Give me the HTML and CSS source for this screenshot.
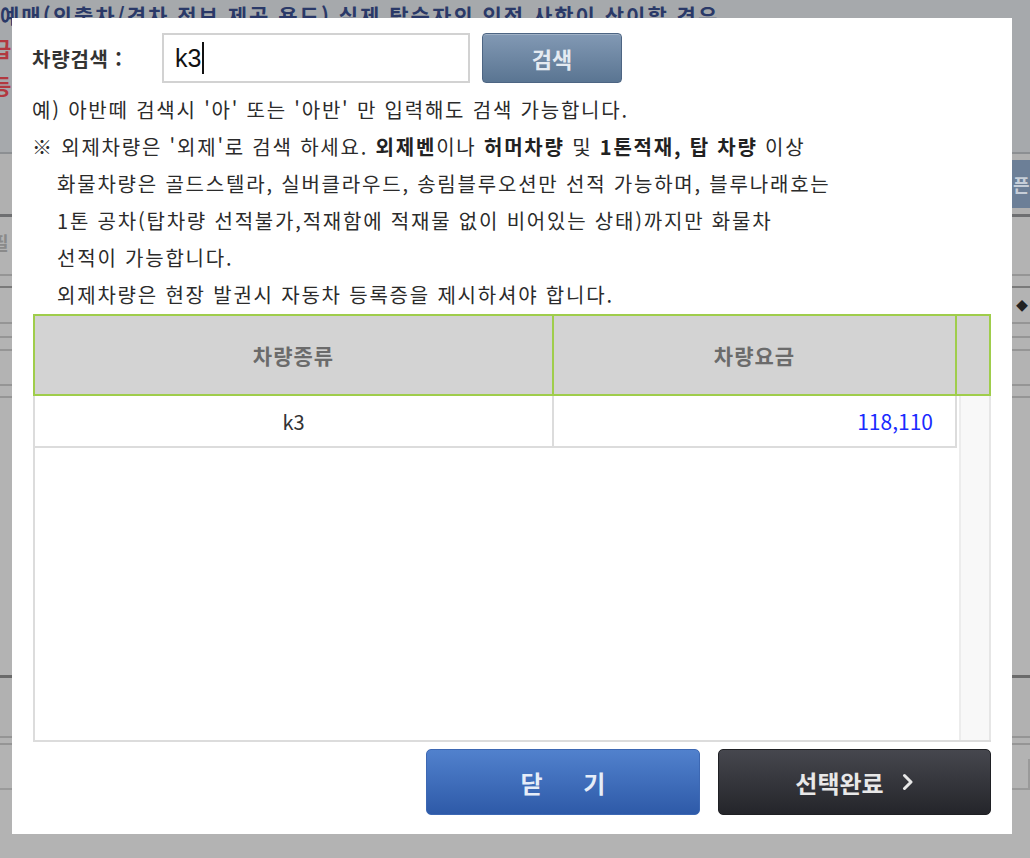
FILE: index.html
```html
<!DOCTYPE html>
<html lang="ko">
<head>
<meta charset="utf-8">
<title>차량검색</title>
<link rel="stylesheet" href="styles.css">
</head>
<body>
<div class="page">
  <div class="page-top">
    <p class="bg-notice">예매(외출차/경차 정보 제공 용도) 실제 탑승자의 인적 사항이 상이할 경우</p>
    <p class="bg-red">급</p>
    <p class="bg-red">등</p>
  </div>
  <div class="bg-line l1"></div>
  <div class="band b1"><span class="bg-btn">픈</span></div>
  <div class="bg-line l2"></div>
  <div class="band b2"><span class="bg-glyph">필</span></div>
  <div class="bg-line l3"></div>
  <div class="band b3"></div>
  <div class="bg-line l4"></div>
  <div class="band b4"><span class="bg-mark">◆</span></div>
  <div class="bg-line l3"></div>
  <div class="band b5"></div>
  <div class="bg-line l3"></div>
  <div class="band b6"></div>
  <div class="bg-line l3"></div>
  <div class="band b7"></div>
  <div class="bg-line l3"></div>
  <div class="band b8"></div>
  <div class="bg-line l3"></div>
  <div class="band b9"></div>
  <div class="bg-line l5"></div>
  <div class="band b10"></div>
  <div class="bg-line l3"></div>
  <div class="band b11"></div>
  <div class="bg-line l3"></div>
  <div class="bottom-row">
    <div class="bbox w1"></div>
    <div class="vsep"></div>
    <div class="bbox w2"></div>
    <div class="vsep"></div>
    <div class="bbox w3"><span>0-1</span></div>
    <div class="vsep"></div>
    <div class="bbox w4"><span>0101-7021-7-18</span></div>
  </div>
</div>

<div class="modal">
  <div class="search-row">
    <label class="search-label">차량검색 :</label>
    <div class="search-input"><span class="typed">k3</span><span class="caret"></span></div>
    <button class="search-btn">검색</button>
  </div>
  <div class="notes">
    <p>예) 아반떼 검색시 '아' 또는 '아반' 만 입력해도 검색 가능합니다.</p>
    <p>※ 외제차량은 '외제'로 검색 하세요. <b>외제벤</b>이나 <b>허머차량</b> 및 <b>1톤적재, 탑 차량</b> 이상</p>
    <p class="indent">화물차량은 골드스텔라, 실버클라우드, 송림블루오션만 선적 가능하며, 블루나래호는</p>
    <p class="indent">1톤 공차(탑차량 선적불가,적재함에 적재물 없이 비어있는 상태)까지만 화물차</p>
    <p class="indent">선적이 가능합니다.</p>
    <p class="indent">외제차량은 현장 발권시 자동차 등록증을 제시하셔야 합니다.</p>
  </div>
  <div class="grid">
    <div class="grid-head">
      <div class="hcell c1">차량종류</div>
      <div class="hcell c2">차량요금</div>
      <div class="hcell c3"></div>
    </div>
    <div class="grid-body">
      <div class="rows">
        <div class="row">
          <div class="cell c1">k3</div>
          <div class="cell c2 price">118,110</div>
        </div>
      </div>
      <div class="gutter"></div>
    </div>
  </div>
  <div class="actions">
    <button class="btn btn-close">닫 기</button>
    <button class="btn btn-done"><span>선택완료</span><svg class="chev" width="12" height="18" viewBox="0 0 12 18"><polyline points="2.5,2.5 9,9 2.5,15.5" fill="none" stroke="#e8e8e8" stroke-width="3" stroke-linecap="round" stroke-linejoin="round"/></svg></button>
  </div>
</div>
</body>
</html>
```
FILE: styles.css
```css
* { box-sizing: border-box; }
html, body { margin: 0; padding: 0; }
body {
  width: 1030px;
  height: 858px;
  overflow: hidden;
  background: #b3b3b3;
  font-family: "Noto Sans CJK KR", "Noto Sans", sans-serif;
  color: #2b2b2b;
}
p { margin: 0; }

/* background page */
.page { width: 1030px; }
.page-top {
  height: 152px;
  background: #a6a9ac;
}
.bg-notice {
  font-size: 21px;
  font-weight: 700;
  letter-spacing: 2px;
  color: #2a3968;
  line-height: 30px;
  white-space: nowrap;
  overflow: hidden;
  width: 1030px;
}
.bg-red {
  font-size: 21px;
  font-weight: 700;
  color: #b2383f;
  line-height: 37px;
  margin-left: -8px;
  width: 20px;
}
.bg-line { height: 2px; background: #8c8f92; }
.bg-line.l2 { height: 3px; background: #6e6f71; }
.bg-line.l3 { height: 2px; background: #959595; }
.bg-line.l4 { height: 2px; background: #7a7a7a; }
.bg-line.l5 { height: 3px; background: #6a6a6a; }
.band { background: #b3b3b3; display: flex; justify-content: space-between; align-items: center; }
.b1 { height: 60px; background: #b0b0b0; justify-content: flex-end; }
.bg-btn {
  width: 18px; height: 48px; background: #6c7f97; color: #c6ced8;
  font-size: 18px; font-weight: 700; line-height: 48px;
  overflow: hidden; white-space: nowrap; text-indent: 1px;
}
.b2 { height: 57px; }
.bg-glyph { color: #8a8a8a; font-size: 18px; font-weight: 700; margin-left: -8px; margin-top: -8px; }
.b3 { height: 10px; }
.b4 { height: 34px; justify-content: flex-end; }
.bg-mark { color: #222; font-size: 12px; margin-right: 2px; }
.b5 { height: 12px; }
.b6 { height: 11px; }
.b7 { height: 33px; }
.b8 { height: 10px; }
.b9 { height: 277px; }
.b10 { height: 58px; background: #b1b1b1; }
.b11 { height: 5px; }
.bottom-row { display: flex; align-items: flex-start; height: 60px; padding-top: 14px; }
.bbox { height: 31px; border: 2px solid #9a9a9a; border-top: none; }
.bbox span { display: block; color: #333; font-size: 20px; line-height: 22px; padding: 2px 10px; }
.w1 { width: 68px; margin-left: -2px; }
.vsep { width: 2px; height: 50px; background: #9a9a9a; margin: 0 20px 0 30px; }
.w2 { width: 258px; }
.w3 { width: 258px; }
.w4 { width: 320px; }

/* modal */
.modal {
  position: fixed;
  left: 12px;
  top: 18px;
  width: 1000px;
  height: 816px;
  background: #fff;
  padding: 15px 21px 0 20px;
}
.search-row { display: flex; align-items: center; height: 50px; }
.search-label {
  width: 130px;
  font-size: 20px;
  font-weight: 700;
  letter-spacing: 0.8px;
  color: #333;
}
.search-input {
  width: 308px;
  height: 50px;
  border: 2px solid #d2d2d2;
  display: flex;
  align-items: center;
  padding-left: 11px;
  font-family: "Liberation Sans", Arial, sans-serif;
  font-size: 25px;
  color: #111;
}
.caret { display: inline-block; width: 2px; height: 32px; background: #111; margin-left: 1px; }
.search-btn {
  margin-left: 12px;
  width: 140px;
  height: 50px;
  border: 1px solid #4d6583;
  border-radius: 4px;
  background: linear-gradient(#8299b4, #5a7592);
  color: #e4eaf1;
  font-family: "Noto Sans CJK KR", sans-serif;
  font-size: 22px;
  font-weight: 700;
  box-shadow: inset 0 1px 0 rgba(255,255,255,0.25);
}
.notes {
  margin-top: 8px;
  font-size: 20px;
  letter-spacing: 1.8px;
  line-height: 37px;
  color: #2b2b2b;
  white-space: nowrap;
}
.notes b { font-weight: 700; color: #222; }
.notes .indent { padding-left: 25px; }

.grid { margin-left: 1px; width: 958px; margin-top: 1px; }
.grid-head { display: flex; height: 82px; }
.hcell {
  background: #d3d3d3;
  border: 2px solid #9fcd4b;
  display: flex; align-items: center; justify-content: center;
  font-size: 21px; font-weight: 700; color: #6b6b6b; letter-spacing: 1px;
}
.hcell.c1 { width: 521px; }
.hcell.c2 { width: 405px; margin-left: -2px; }
.hcell.c3 { width: 36px; margin-left: -2px; }
.grid-body { display: flex; height: 346px; border-left: 2px solid #dcdcdc; border-bottom: 2px solid #dcdcdc; }
.rows { width: 922px; }
.row { display: flex; height: 52px; border-bottom: 2px solid #dcdcdc; }
.cell { display: flex; align-items: center; font-size: 20px; color: #333; }
.cell.c1 { width: 519px; justify-content: center; border-right: 2px solid #dcdcdc; }
.cell.c2 { width: 403px; justify-content: flex-end; padding-right: 22px; border-right: 2px solid #dcdcdc; }
.price { color: #1a2bff; font-size: 21px; }
.gutter { width: 34px; background: #f8f8f8; border-left: 2px solid #ececec; border-right: 2px solid #e6e6e6; margin-left: 2px; }

.actions { display: flex; justify-content: flex-end; gap: 18px; margin-top: 7px; width: 959px; }
.btn {
  height: 66px;
  border-radius: 5px;
  font-family: "Noto Sans CJK KR", sans-serif;
  font-size: 24px;
  font-weight: 700;
  cursor: pointer;
}
.btn-close {
  width: 274px;
  border: 1px solid #3d68b3;
  background: linear-gradient(#5181cd, #2e5aa8);
  color: #e6edf8;
  word-spacing: 34px;
}
.btn-done {
  width: 273px;
  border: 1px solid #1f2024;
  background: linear-gradient(#46474e, #24252a);
  color: #e8e8e8;
  display: flex;
  align-items: center;
  justify-content: center;
  gap: 18px;
  padding-left: 6px;
}
.chev { display: block; }
```
